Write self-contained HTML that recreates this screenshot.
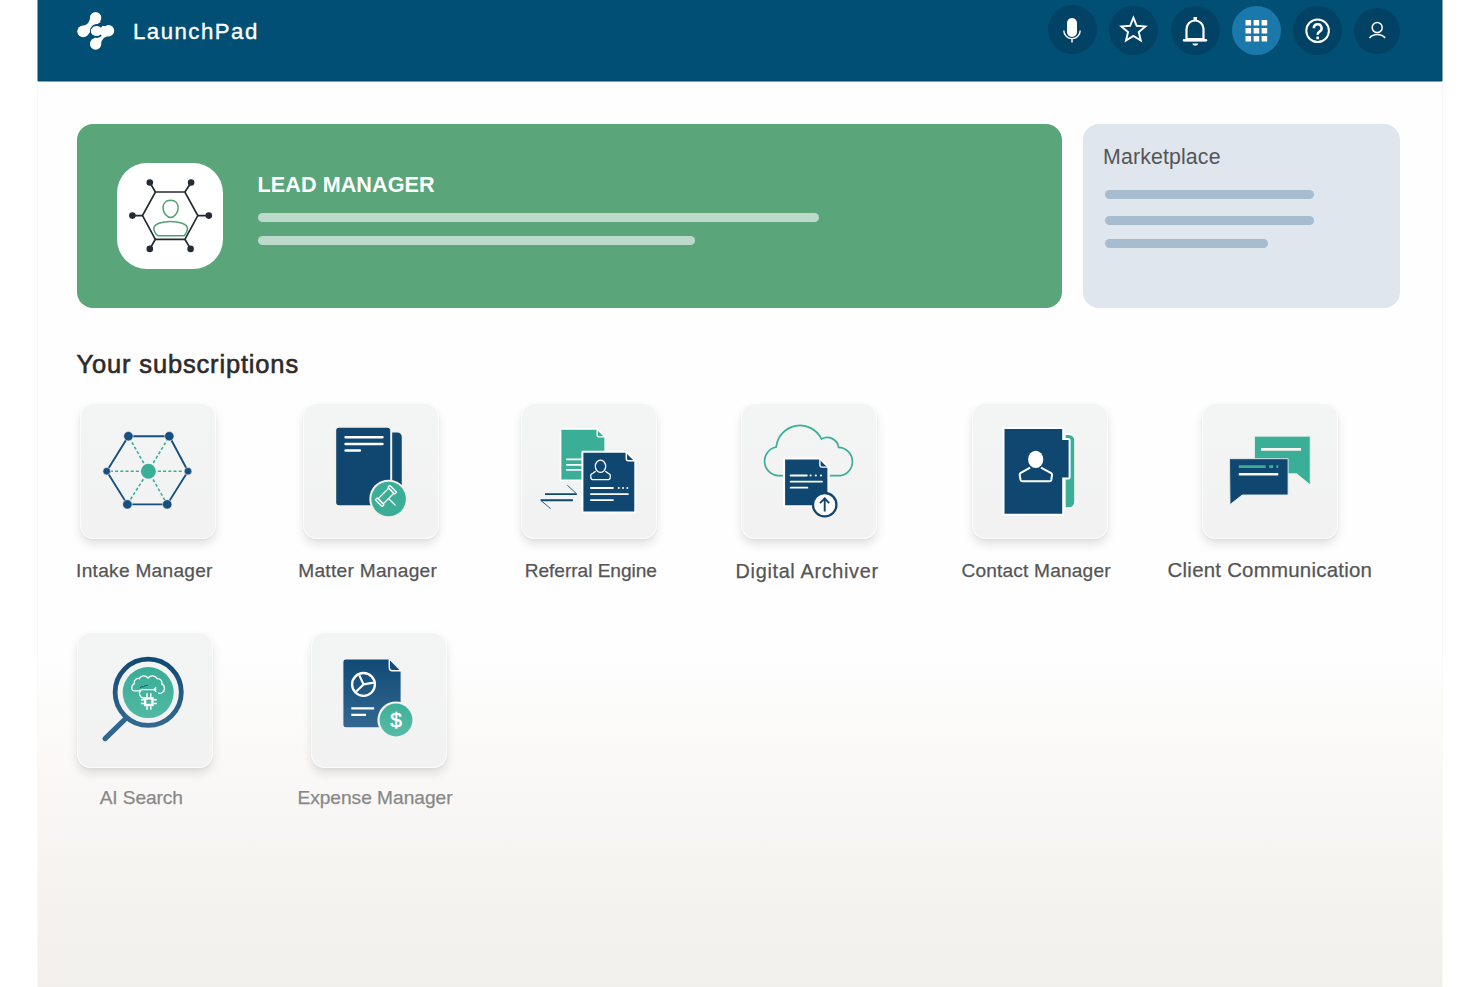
<!DOCTYPE html>
<html><head><meta charset="utf-8">
<style>
*{margin:0;padding:0;box-sizing:border-box}
html,body{width:1480px;height:987px;overflow:hidden;background:#fff;font-family:"Liberation Sans",sans-serif}
.abs{position:absolute}
#main{position:absolute;left:37px;top:0;width:1406px;height:987px;border-left:1px solid #faf8f5;border-right:1px solid #faf8f5;background:linear-gradient(to bottom,#fefefe 0,#fefefe 650px,#faf9f8 760px,#f5f4f1 870px,#f2f0ec 987px)}
#hdr{position:absolute;left:38px;top:0;width:1404px;height:81px;background:#014f75;border-bottom:1px solid #03496d;box-shadow:0 1px 0 rgba(3,73,109,0.5),-1px 0 0 rgba(3,73,109,0.5),1px 0 0 rgba(3,73,109,0.5)}
.hb{position:absolute;width:49px;height:49px;border-radius:50%;background:#024365}
.hb svg{position:absolute;left:0;top:0}
#brand{position:absolute;left:133px;top:21.2px;font-size:22.2px;line-height:22.2px;color:#fff;letter-spacing:1.5px;white-space:nowrap;-webkit-text-stroke:0.35px #fff}
#lead{position:absolute;left:77px;top:124px;width:985px;height:184px;border-radius:16px;background:#5aa57a}
#leadicon{position:absolute;left:117px;top:163px;width:106px;height:106px;border-radius:30px;background:#fff}
#leadtitle{position:absolute;left:257.6px;top:173.62px;font-size:21.59px;line-height:21.59px;font-weight:bold;color:#fff;letter-spacing:0.064px;white-space:nowrap}
.gs{position:absolute;height:9.6px;border-radius:5px;background:#bcdacb}
#mkt{position:absolute;left:1083px;top:124px;width:317px;height:184px;border-radius:16px;background:#dfe6ed}
#mkttitle{position:absolute;left:1103px;top:146.87px;font-size:21.3px;line-height:21.3px;color:#555;letter-spacing:0.15px;white-space:nowrap}
.ms{position:absolute;height:9.4px;border-radius:5px;background:#a7bccf}
#subs{position:absolute;left:76.6px;top:351.6px;font-size:25.51px;line-height:25.51px;color:#2e2a2a;letter-spacing:0.83px;white-space:nowrap;-webkit-text-stroke:0.6px #2e2a2a}
.tile{position:absolute;width:136px;height:136px;border-radius:14px;background:linear-gradient(#f3f5f4,#f1f2f1);box-shadow:inset 0 0 0 1px rgba(255,255,255,0.7),0 6px 10px rgba(0,0,0,0.10),0 1px 3px rgba(0,0,0,0.05)}
.tile svg{position:absolute;left:0;top:0}
.lbl{position:absolute;white-space:nowrap;-webkit-text-stroke:0.25px currentColor}
</style></head><body>
<div id="main"></div>
<div id="hdr"></div>
<!-- logo -->
<svg class="abs" style="left:70px;top:5px" width="55" height="50" viewBox="0 0 55 50">
  <g fill="#fff">
    <circle cx="25.6" cy="12.7" r="5.7"/>
    <circle cx="13.2" cy="26.3" r="5.9"/>
    <circle cx="38.5" cy="25.8" r="5.7"/>
    <circle cx="25.6" cy="39" r="5.7"/>
    <path d="M20.2 11.5 C20 17 17 20.5 12 21 L16 30 C19 30 21 25 24 22 C26 19.5 29 18 31 17 Z"/>
    <path d="M30.8 40.5 C31 35 34 31.5 39 31 L36 21.5 C33 21.5 31 27 28 30 C26 32.5 23 34 21 35 Z"/>
    <path d="M25.8 21 L35 21 L36 30 L27 31 Z"/>
  </g>
  <path d="M31.5 22.2 A6 6 0 1 0 31.2 30.2" fill="none" stroke="#014f75" stroke-width="1.9"/>
  <circle cx="25.8" cy="26.1" r="4.9" fill="#fff"/>
</svg>
<div id="brand">LaunchPad</div>

<!-- header buttons -->
<div class="hb" style="left:1048px;top:5px"><svg width="49" height="49" viewBox="0 0 49 49">
  <rect x="19" y="13" width="10" height="19" rx="5" fill="#fff"/>
  <path d="M15.8 25.4 a8.2 8.2 0 0 0 16.4 0" fill="none" stroke="#fff" stroke-width="1.4"/>
  <line x1="24" y1="33.5" x2="24" y2="37.6" stroke="#fff" stroke-width="1.5"/>
</svg></div>
<div class="hb" style="left:1109px;top:6px"><svg width="49" height="49" viewBox="0 0 49 49">
  <path d="M24.40 11.70 L27.69 19.77 L36.38 20.41 L29.73 26.03 L31.81 34.49 L24.40 29.90 L16.99 34.49 L19.07 26.03 L12.42 20.41 L21.11 19.77 Z" fill="none" stroke="#fff" stroke-width="1.9" stroke-linejoin="miter" stroke-miterlimit="3"/>
</svg></div>
<div class="hb" style="left:1171px;top:6px"><svg width="49" height="49" viewBox="0 0 49 49">
  <path d="M15.5 34 L15.5 23 a8.5 8.5 0 0 1 17 0 L32.5 34" fill="none" stroke="#fff" stroke-width="2.2"/>
  <path d="M13 34.2 L35 34.2" stroke="#fff" stroke-width="2.4" stroke-linecap="round"/>
  <path d="M12.5 35.3 L35.5 35.3 L32.5 32 L15.5 32 Z" fill="#fff"/>
  <rect x="22.5" y="11" width="3.5" height="4" fill="#fff"/>
  <path d="M21.5 37.5 L27 37.5 a2.75 2 0 0 1 -5.5 0Z" fill="#fff"/>
</svg></div>
<div class="hb" style="left:1232px;top:6px;background:#1a78aa"><svg width="49" height="49" viewBox="0 0 49 49">
  <g fill="#fff">
    <rect x="13.5" y="14" width="5.6" height="5.6" rx="0.6"/><rect x="21.6" y="14" width="5.6" height="5.6" rx="0.6"/><rect x="29.6" y="14" width="5.6" height="5.6" rx="0.6"/>
    <rect x="13.5" y="22" width="5.6" height="5.6" rx="0.6"/><rect x="21.6" y="22" width="5.6" height="5.6" rx="0.6"/><rect x="29.6" y="22" width="5.6" height="5.6" rx="0.6"/>
    <rect x="13.5" y="30" width="5.6" height="5.6" rx="0.6"/><rect x="21.6" y="30" width="5.6" height="5.6" rx="0.6"/><rect x="29.6" y="30" width="5.6" height="5.6" rx="0.6"/>
  </g>
</svg></div>
<div class="hb" style="left:1293px;top:6px"><svg width="49" height="49" viewBox="0 0 49 49">
  <circle cx="24.6" cy="24.8" r="11.3" fill="none" stroke="#fff" stroke-width="2"/>
  <path d="M20.8 22.2 a3.9 3.9 0 1 1 5.8 3.4 c-1.4 0.8 -2 1.5 -2 3.2" fill="none" stroke="#fff" stroke-width="2.5"/>
  <rect x="23.3" y="30.6" width="2.7" height="2.7" rx="0.5" fill="#fff"/>
</svg></div>
<div class="hb" style="left:1354px;top:8px;width:46px;height:46px"><svg width="46" height="46" viewBox="0 0 46 46">
  <circle cx="23.2" cy="19.6" r="5" fill="none" stroke="#fff" stroke-width="1.5"/>
  <path d="M15.5 30 a9.5 8 0 0 1 15.6 0" fill="none" stroke="#fff" stroke-width="1.5"/>
</svg></div>

<!-- lead manager -->
<div id="lead"></div>
<div id="leadicon"><svg width="106" height="106" viewBox="0 0 106 106" style="position:absolute;left:0;top:0">
  <g stroke="#262a35" stroke-width="1.7" fill="none">
    <path d="M38.4 29 L67.9 29 L80.8 52.6 L67.9 76.3 L38.4 76.3 L25.5 52.6 Z"/>
    <path d="M38.4 29 L32.8 19.5 M67.9 29 L74.1 19.5 M80.8 52.6 L91.8 52.6 M67.9 76.3 L73.6 85.9 M38.4 76.3 L32.8 85.9 M25.5 52.6 L15.4 52.6"/>
  </g>
  <g fill="#262a35">
    <circle cx="32.8" cy="19.5" r="3.3"/><circle cx="74.1" cy="19.5" r="3.3"/>
    <circle cx="15.4" cy="52.6" r="3.3"/><circle cx="91.8" cy="52.6" r="3.3"/>
    <circle cx="32.8" cy="85.9" r="3.3"/><circle cx="73.6" cy="85.9" r="3.3"/>
  </g>
  <g stroke="#52a070" stroke-width="1.5" fill="none">
    <path d="M53.6 37.2 C58.5 37.2 61.2 40.5 61.2 45 C61.2 49.5 57 54.6 53.6 54.6 C50.2 54.6 46 49.5 46 45 C46 40.5 48.7 37.2 53.6 37.2 Z"/>
    <path d="M40.8 72.8 L67.2 72.8 C69 70.5 70.5 68 70.5 65.5 C70.5 61 62 58.4 53.6 58.4 C45 58.4 36.8 61 36.8 65.5 C36.8 68 38.5 70.5 40.8 72.8 Z"/>
  </g>
</svg></div>
<div id="leadtitle">LEAD MANAGER</div>
<div class="gs" style="left:258px;top:212.8px;width:561px"></div>
<div class="gs" style="left:258px;top:235.7px;width:437px"></div>

<!-- marketplace -->
<div id="mkt"></div>
<div id="mkttitle">Marketplace</div>
<div class="ms" style="left:1105px;top:190px;width:209px"></div>
<div class="ms" style="left:1105px;top:216px;width:209px"></div>
<div class="ms" style="left:1105px;top:239px;width:163px"></div>

<div id="subs">Your subscriptions</div>

<!-- tiles -->
<div class="tile" style="left:80px;top:403px"><svg width="136" height="135" viewBox="0 0 136 135">
 <g stroke="#17507f" stroke-width="1.9" fill="none">
  <path d="M48.4 33.2 L89.3 33.2 L108 68.2 L87.2 101.4 L47.4 101.4 L26.7 68.2 Z"/>
 </g>
 <g stroke="#3aae97" stroke-width="1.6" stroke-dasharray="3 2.2" fill="none">
  <path d="M63.7 60.0 L50.6 37.1 M73.3 60.0 L87.0 37.1 M77.9 68.2 L103.5 68.2 M73.1 76.5 L85.0 97.5 M63.3 76.2 L49.8 97.6 M58.9 68.2 L31.2 68.2"/>
 </g>
 <g fill="#17507f" stroke="#f7eef5" stroke-width="0.6">
  <circle cx="48.4" cy="33.2" r="4.7"/><circle cx="89.3" cy="33.2" r="4.7"/>
  <circle cx="26.7" cy="68.2" r="3.8"/><circle cx="108" cy="68.2" r="3.8"/>
  <circle cx="47.4" cy="101.4" r="4.7"/><circle cx="87.2" cy="101.4" r="4.7"/>
 </g>
 <circle cx="68.4" cy="68.2" r="7.5" fill="#3aae97"/>
</svg></div>
<div class="tile" style="left:303px;top:403px"><svg width="136" height="135" viewBox="0 0 136 135">
 <path d="M86 28.7 L94.5 28.7 A5 5 0 0 1 99.5 33.7 L99.5 92 L86 92 Z" fill="#0f4770" stroke="#f6f1ea" stroke-width="1.5"/>
 <rect x="32.2" y="23.8" width="56" height="79.5" rx="3.8" fill="#0f4770" stroke="#f6f1ea" stroke-width="2"/>
 <g stroke="#fff" stroke-width="2.4" stroke-linecap="round">
  <path d="M42.5 34.3 L79.5 34.3 M42.5 41 L79.5 41 M42.5 47.5 L57 47.5"/>
 </g>
 <circle cx="85.6" cy="96" r="19.3" fill="#f4f0ea"/>
 <circle cx="85.6" cy="96" r="17.3" fill="#3aae97"/>
 <g transform="translate(83 93) rotate(-45)" fill="none" stroke="#fff" stroke-width="1.3">
  <rect x="-7.5" y="-3.6" width="15" height="7.2"/>
  <rect x="-10.2" y="-4.8" width="2.7" height="9.6" rx="0.6"/>
  <rect x="7.5" y="-4.8" width="2.7" height="9.6" rx="0.6"/>
  <path d="M0 3.6 L0 13.5"/>
 </g>
</svg></div>
<div class="tile" style="left:521px;top:403px"><svg width="136" height="135" viewBox="0 0 136 135">
 <path d="M39.6 25.9 L76.2 25.9 L84.2 33.9 L84.2 77.2 L39.6 77.2 Z" fill="#3aae97" stroke="#fff" stroke-width="1.6" stroke-linejoin="round"/>
 <path d="M76.2 25.9 L76.2 31.9 A2 2 0 0 0 78.2 33.9 L84.2 33.9" fill="none" stroke="#fff" stroke-width="1.4"/>
 <g stroke="#fff" stroke-width="1.8"><path d="M45.2 56.3 L70 56.3 M45.2 61.8 L70 61.8 M45.2 66.9 L70 66.9"/></g>
 <path d="M61.4 48.8 L105.3 48.8 L114.3 57.8 L114.3 109.5 L61.4 109.5 Z" fill="#0f4770" stroke="#fff" stroke-width="2" stroke-linejoin="round"/>
 <path d="M105.3 48.8 L105.3 55.8 A2 2 0 0 0 107.3 57.8 L114.3 57.8" fill="none" stroke="#fff" stroke-width="1.5"/>
 <ellipse cx="79.5" cy="63.3" rx="5.2" ry="6.1" fill="none" stroke="#fff" stroke-width="1.3"/>
 <path d="M74.7 68.3 L70 71.5 Q69.5 72 69.9 75 Q70.3 76.6 71.5 76.6 L87.6 76.6 Q88.8 76.6 89.2 75 Q89.5 72 89 71.5 L84.3 68.3" fill="none" stroke="#fff" stroke-width="1.3"/>
 <g stroke="#fff" stroke-width="1.8"><path d="M69.2 85 L92.6 85 M69.2 91.1 L107.6 91.1 M69.2 97.2 L92.6 97.2"/></g>
 <g fill="#fff"><circle cx="97.8" cy="85" r="1"/><circle cx="102" cy="85" r="1"/><circle cx="106.3" cy="85" r="1"/></g>
 <g stroke="#0f4770" stroke-width="1.9"><path d="M24 91.1 L55.8 91.1 M19.6 97.2 L51.9 97.2"/></g>
 <g stroke="#17507f" stroke-width="0.9"><path d="M46.3 82.2 L55 90.3 M20.5 98 L29.6 105.6"/></g>
</svg></div>
<div class="tile" style="left:741px;top:403px"><svg width="136" height="135" viewBox="0 0 136 135">
 <path d="M41.9 72.7 L37.5 72.7 A14.5 14.5 0 0 1 35.2 44 A23.9 23.9 0 0 1 80.5 36 A11.5 11.5 0 0 1 97.6 44.3 A14.3 14.3 0 0 1 99.5 72.7 L88.7 72.7" fill="none" stroke="#3aae97" stroke-width="1.7"/>
 <path d="M43.1 55.6 L78.9 55.6 L87.4 64.1 L87.4 103.3 L43.1 103.3 Z" fill="#0f4770" stroke="#fff" stroke-width="2" stroke-linejoin="round"/>
 <path d="M78.9 55.6 L78.9 62.1 A2 2 0 0 0 80.9 64.1 L87.4 64.1" fill="none" stroke="#fff" stroke-width="1.4"/>
 <g stroke="#fff" stroke-width="1.8" stroke-linecap="round"><path d="M49.6 72.5 L65.8 72.5 M49.6 78.7 L81 78.7 M49.6 84.7 L66.4 84.7"/></g>
 <g fill="#fff"><circle cx="69.6" cy="72.5" r="1.1"/><circle cx="74.8" cy="72.5" r="1.1"/><circle cx="80" cy="72.5" r="1.1"/></g>
 <circle cx="83.7" cy="101.7" r="11.7" fill="#fff" stroke="#0f4770" stroke-width="2.3"/>
 <g stroke="#0f4770" stroke-width="1.9" fill="none"><path d="M83.7 108.4 L83.7 95.6 M79 100.2 L83.7 95.3 L88.2 100.2"/></g>
</svg></div>
<div class="tile" style="left:972px;top:403px"><svg width="136" height="135" viewBox="0 0 136 135">
 <path d="M92.9 31.2 L97 31.2 A6 6 0 0 1 103 37.2 L103 99.1 A6 6 0 0 1 97 105.1 L92.9 105.1 Z" fill="#3aae97" stroke="#fff" stroke-width="1.5"/>
 <path d="M31.5 24.9 L91.2 24.9 L91.2 36 L96.1 36 Q97.6 36 97.6 37.5 L97.6 73.9 Q97.6 75.4 96.1 75.4 L91.2 75.4 L91.2 111.7 L31.5 111.7 Z" fill="#0f4770" stroke="#fff" stroke-width="2"/>
 <ellipse cx="63.7" cy="56.4" rx="7.6" ry="8.7" fill="#fff"/>
 <path d="M58.1 64.6 L48.4 70.2 Q47.5 70.8 47.7 72 L48.6 77 Q49 78.3 50.4 78.3 L77.6 78.3 Q79 78.3 79.3 77 L80 72 Q80.2 70.8 79.2 70.2 L69 64.6" fill="none" stroke="#fff" stroke-width="2"/>
</svg></div>
<div class="tile" style="left:1202px;top:403px"><svg width="136" height="135" viewBox="0 0 136 135">
 <path d="M52.5 33.2 L108.2 33.2 L108.2 81.8 L94.6 70.7 L52.5 70.7 Z" fill="#3aae97" stroke="#eef6f3" stroke-width="0.8" stroke-linejoin="round"/>
 <path d="M59.1 46.4 L99.1 46.4" stroke="#faf3ee" stroke-width="2.6"/>
 <path d="M27.5 55.7 L86.1 55.7 L86.1 92 L40.2 92 L28 101.6 Z" fill="#0f4770" stroke="#e9eef3" stroke-width="0.9" stroke-linejoin="round"/>
 <g stroke="#3aae97" stroke-width="2.6"><path d="M36.8 63.6 L63.7 63.6 M67.2 63.6 L71.2 63.6 M74.3 63.6 L76.3 63.6"/></g>
 <path d="M36.8 71.2 L76.3 71.2" stroke="#faf3ee" stroke-width="2.6"/>
</svg></div>
<div class="tile" style="left:77px;top:632px"><svg width="136" height="135" viewBox="0 0 136 135">
 <defs>
  <linearGradient id="gn1" x1="0" y1="0" x2="0" y2="1"><stop offset="0" stop-color="#0f4a75"/><stop offset="1" stop-color="#336890"/></linearGradient>
  <linearGradient id="gt1" x1="0" y1="0" x2="0" y2="1"><stop offset="0" stop-color="#39ad96"/><stop offset="1" stop-color="#50b9a3"/></linearGradient>
 </defs>
 <path d="M28.1 106.6 L48.9 86.4" stroke="#2f6790" stroke-width="5.2" stroke-linecap="round"/>
 <circle cx="71.2" cy="60.3" r="33.1" fill="none" stroke="url(#gn1)" stroke-width="4.8"/>
 <circle cx="71.2" cy="60.6" r="25.5" fill="url(#gt1)"/>
 <g transform="translate(0 6)"><g fill="none" stroke="#fff" stroke-width="1.3" stroke-linecap="round">
  <path d="M63.5 52.9 L57 52.9 C54 52.5 53.8 47.5 57.3 45.6 C56.8 41.5 60 39.8 62.3 40.6 C63.5 37.5 68.5 36.8 71.1 40 C73.5 36.8 78.5 37.5 80.1 40.6 C83.5 40.5 85.5 43 84.9 46.2 C88.3 47.5 88.5 53.5 84.5 55 C83.5 55.4 82.5 55.4 81.6 55.2"/>
  <path d="M79 51.6 L66 51.6 C62.5 51.6 62 54.5 62.8 57 C63.5 59 65 60 67 60.2"/>
  <path d="M78.8 49.6 L77.2 51.6 L78.8 53.4"/>
 </g>
 <rect x="68.1" y="60.4" width="7.4" height="6.6" fill="none" stroke="#fff" stroke-width="2.4"/>
 <path d="M70 55.2 L70 59.2 M73.8 55.2 L73.8 59.2 M70 68.2 L70 71.8 M73.8 68.2 L73.8 71.8 M63.9 61.8 L66.9 61.8 M63.9 65.6 L66.9 65.6 M76.7 61.8 L79.9 61.8 M76.7 65.6 L79.9 65.6" stroke="#fff" stroke-width="1.5"/>
 <path d="M63 49.9 Q65 48 66.5 48.6 Q68.5 47.2 70.7 47.3" fill="none" stroke="#17507f" stroke-width="1"/>
</g>
</svg></div>
<div class="tile" style="left:311px;top:632px"><svg width="136" height="135" viewBox="0 0 136 135">
 <defs>
  <linearGradient id="gn2" x1="0" y1="0" x2="0" y2="1"><stop offset="0" stop-color="#0f4a75"/><stop offset="1" stop-color="#336890"/></linearGradient>
  <linearGradient id="gt2" x1="0" y1="0" x2="0" y2="1"><stop offset="0" stop-color="#3fb098"/><stop offset="1" stop-color="#57bba7"/></linearGradient>
 </defs>
 <path d="M34.8 26.9 L78.3 26.9 L90.2 38.8 L90.2 92.9 A3 3 0 0 1 87.2 95.9 L34.8 95.9 A3 3 0 0 1 31.8 92.9 L31.8 29.9 A3 3 0 0 1 34.8 26.9 Z" fill="url(#gn2)" stroke="#f5f5f5" stroke-width="1.2"/>
 <path d="M78.3 26.9 L78.3 35.8 A3 3 0 0 0 81.3 38.8 L90.2 38.8" fill="none" stroke="#fff" stroke-width="1.4"/>
 <circle cx="52.5" cy="52.4" r="11.4" fill="none" stroke="#fff" stroke-width="2.3"/>
 <path d="M52.5 52.4 L48.3 43.3 M52.5 52.4 L62.8 50.6 M52.5 52.4 L45.2 59.5" stroke="#fff" stroke-width="2.1"/>
 <g stroke="#fff" stroke-width="2.2"><path d="M40.3 76.3 L63.1 76.3 M40.3 82.9 L55 82.9"/></g>
 <circle cx="85" cy="88" r="18.6" fill="#f3f3f2"/>
 <circle cx="85" cy="88" r="16.4" fill="url(#gt2)"/>
 <text x="85" y="95.2" text-anchor="middle" font-family="Liberation Sans" font-size="21" fill="#fff" stroke="#fff" stroke-width="0.5">$</text>
</svg></div>

<div class="lbl" style="left:76.1px;top:560.71px;font-size:19.13px;line-height:19.13px;letter-spacing:0.277px;color:#555">Intake Manager</div>
<div class="lbl" style="left:298.2px;top:560.71px;font-size:19.13px;line-height:19.13px;letter-spacing:0.292px;color:#555">Matter Manager</div>
<div class="lbl" style="left:524.7px;top:560.61px;font-size:19.13px;line-height:19.13px;letter-spacing:-0.036px;color:#555">Referral Engine</div>
<div class="lbl" style="left:735.6px;top:562.49px;font-size:19.86px;line-height:19.86px;letter-spacing:0.667px;color:#555">Digital Archiver</div>
<div class="lbl" style="left:961.4px;top:560.61px;font-size:19.13px;line-height:19.13px;letter-spacing:0.186px;color:#555">Contact Manager</div>
<div class="lbl" style="left:1167.6px;top:559.50px;font-size:20.43px;line-height:20.43px;letter-spacing:0.237px;color:#555">Client Communication</div>
<div class="lbl" style="left:99.7px;top:788.31px;font-size:19.13px;line-height:19.13px;letter-spacing:-0.088px;color:#888">AI Search</div>
<div class="lbl" style="left:297.4px;top:788.31px;font-size:19.13px;line-height:19.13px;letter-spacing:0.007px;color:#888">Expense Manager</div>
</body></html>
